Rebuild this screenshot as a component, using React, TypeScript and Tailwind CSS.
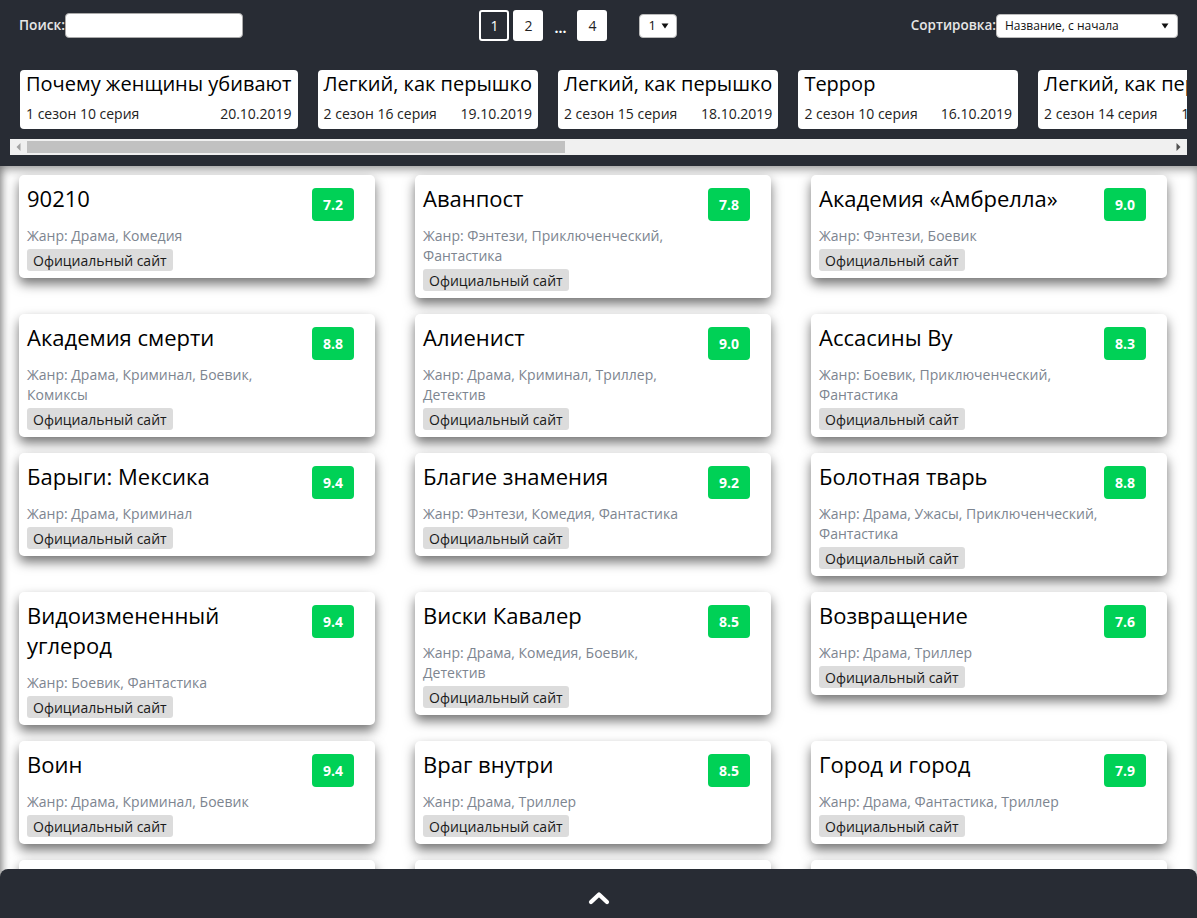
import React from "react";

const episodes = [
  { t: "Почему женщины убивают", s: "1 сезон 10 серия", d: "20.10.2019" },
  { t: "Легкий, как перышко", s: "2 сезон 16 серия", d: "19.10.2019" },
  { t: "Легкий, как перышко", s: "2 сезон 15 серия", d: "18.10.2019" },
  { t: "Террор", s: "2 сезон 10 серия", d: "16.10.2019" },
  { t: "Легкий, как перышко", s: "2 сезон 14 серия", d: "12.10.2019" },
  { t: "Террор", s: "2 сезон 9 серия", d: "09.10.2019" },
];

const shows = [
  { t: "90210", r: "7.2", g: "Драма, Комедия" },
  { t: "Аванпост", r: "7.8", g: "Фэнтези, Приключенческий, Фантастика" },
  { t: "Академия «Амбрелла»", r: "9.0", g: "Фэнтези, Боевик" },
  { t: "Академия смерти", r: "8.8", g: "Драма, Криминал, Боевик, Комиксы" },
  { t: "Алиенист", r: "9.0", g: "Драма, Криминал, Триллер, Детектив" },
  { t: "Ассасины Ву", r: "8.3", g: "Боевик, Приключенческий, Фантастика" },
  { t: "Барыги: Мексика", r: "9.4", g: "Драма, Криминал" },
  { t: "Благие знамения", r: "9.2", g: "Фэнтези, Комедия, Фантастика" },
  { t: "Болотная тварь", r: "8.8", g: "Драма, Ужасы, Приключенческий, Фантастика" },
  { t: "Видоизмененный углерод", r: "9.4", g: "Боевик, Фантастика" },
  { t: "Виски Кавалер", r: "8.5", g: "Драма, Комедия, Боевик, Детектив" },
  { t: "Возвращение", r: "7.6", g: "Драма, Триллер" },
  { t: "Воин", r: "9.4", g: "Драма, Криминал, Боевик" },
  { t: "Враг внутри", r: "8.5", g: "Драма, Триллер" },
  { t: "Город и город", r: "7.9", g: "Драма, Фантастика, Триллер" },
  { t: "Готэм", r: "8.4", g: "Драма, Криминал, Боевик" },
  { t: "Грань", r: "8.7", g: "Драма, Фантастика, Детектив" },
  { t: "Дамбо", r: "7.5", g: "Фэнтези, Приключенческий" },
];

function Caret() {
  return (
    <svg width="8" height="6" viewBox="0 0 8 6" className="shrink-0">
      <path d="M0.5 0.5 L7.5 0.5 L4 5.5 Z" fill="#111" />
    </svg>
  );
}

export default function App() {
  return (
    <div
      className="min-h-screen bg-white"
      style={{ fontFamily: '"Open Sans", "Noto Sans", sans-serif' }}
    >
      <header className="bg-[#282c34] pt-[10px] pb-[11px]">
        <div className="flex items-center justify-between px-[19px] h-[31px]">
          <div className="flex items-center">
            <span className="text-[13.7px] font-semibold text-[#e6e6e6]">Поиск:</span>
            <div className="w-[178px] h-[25px] bg-white rounded-[4px] border border-[#aaa]" />
          </div>
          <div className="flex items-center pl-[3px]">
            <div className="w-[30px] h-[31px] rounded-[3px] border-2 border-white flex items-center justify-center text-[14px] text-white">
              1
            </div>
            <div className="ml-[4px] w-[30px] h-[31px] rounded-[3px] bg-white flex items-center justify-center text-[14px] text-[#222]">
              2
            </div>
            <div className="w-[34px] text-center text-[14px] font-bold text-white leading-none pt-[4px]">
              ...
            </div>
            <div className="w-[30px] h-[31px] rounded-[3px] bg-white flex items-center justify-center text-[14px] text-[#222]">
              4
            </div>
            <div className="ml-[32px] w-[38px] h-[24px] rounded-[4px] bg-white border border-[#bbb] flex items-center justify-between pl-[8px] pr-[7px] text-[13px] text-[#111]">
              <span>1</span>
              <Caret />
            </div>
          </div>
          <div className="flex items-center">
            <span className="text-[13.5px] font-semibold text-[#e6e6e6]">Сортировка:</span>
            <div className="w-[182px] h-[24px] rounded-[4px] bg-white border border-[#bbb] flex items-center justify-between pl-[8px] pr-[8px] text-[12px] text-[#111]">
              <span>Название, с начала</span>
              <Caret />
            </div>
          </div>
        </div>

        <div className="mt-[29px] mx-[10px] overflow-hidden">
          <div className="flex gap-[20px] pl-[10px]">
            {episodes.map((e, i) => (
              <div
                key={i}
                className="shrink-0 bg-white rounded-[4px] px-[6px] pb-[5px] h-[59px]"
              >
                <div className="text-[20px] leading-[28px] text-black whitespace-nowrap">
                  {e.t}
                </div>
                <div className="mt-[6px] flex justify-between gap-[23px] text-[14px] leading-[20px] text-[#222] whitespace-nowrap">
                  <span>{e.s}</span>
                  <span>{e.d}</span>
                </div>
              </div>
            ))}
          </div>
        </div>

        <div className="mt-[10px] mx-[10px] h-[16px] bg-[#f0f0f0] flex items-center">
          <div className="w-[17px] h-full flex items-center justify-center">
            <svg width="5" height="8" viewBox="0 0 5 8">
              <path d="M4.5 0 L4.5 8 L0.5 4 Z" fill="#a3a3a3" />
            </svg>
          </div>
          <div className="w-[538px] h-[12px] bg-[#c1c1c1]" />
          <div className="flex-1" />
          <div className="w-[17px] h-full flex items-center justify-center">
            <svg width="5" height="8" viewBox="0 0 5 8">
              <path d="M0.5 0 L0.5 8 L4.5 4 Z" fill="#505050" />
            </svg>
          </div>
        </div>
      </header>

      <main className="shadow-[inset_0_4px_10px_rgba(0,0,0,0.35),inset_6px_0_8px_-4px_rgba(0,0,0,0.3)] pt-[9px] pl-[19px] pb-[80px] min-h-[760px]">
        <div className="flex flex-wrap items-start gap-x-[40px] gap-y-[16px] w-[1148px]">
          {shows.map((s, i) => (
            <div
              key={i}
              className="w-[356px] bg-white rounded-[5px] shadow-[0_6px_12px_rgba(0,0,0,0.55)] pt-[8px] pb-[7px] px-[8px] flex"
            >
              <div className="w-[280px]">
                <div className="w-[272px] text-[22px] leading-[30px] text-black">{s.t}</div>
                <div className="mt-[13px] text-[14px] leading-[20px] text-[#7d8590]">
                  Жанр: {s.g}
                </div>
                <div className="mt-[3px] flex w-fit items-center h-[22px] px-[6px] rounded-[3px] bg-[#dcdcdc] text-[14px] text-[#1a1a1a]">
                  Официальный сайт
                </div>
              </div>
              <div className="ml-auto mr-[13px] mt-[5px] w-[42px] h-[33px] rounded-[4px] bg-[#00d156] flex items-center justify-center text-[14px] font-bold text-white">
                {s.r}
              </div>
            </div>
          ))}
        </div>
      </main>

      <div className="fixed left-0 right-0 bottom-0 h-[49px] rounded-t-[8px] bg-[#282c34] flex justify-center pt-[22px]">
        <svg width="22" height="14" viewBox="0 0 22 14">
          <path
            d="M3 11 L11 3.5 L19 11"
            fill="none"
            stroke="white"
            strokeWidth="4.2"
            strokeLinecap="round"
            strokeLinejoin="round"
          />
        </svg>
      </div>
    </div>
  );
}
